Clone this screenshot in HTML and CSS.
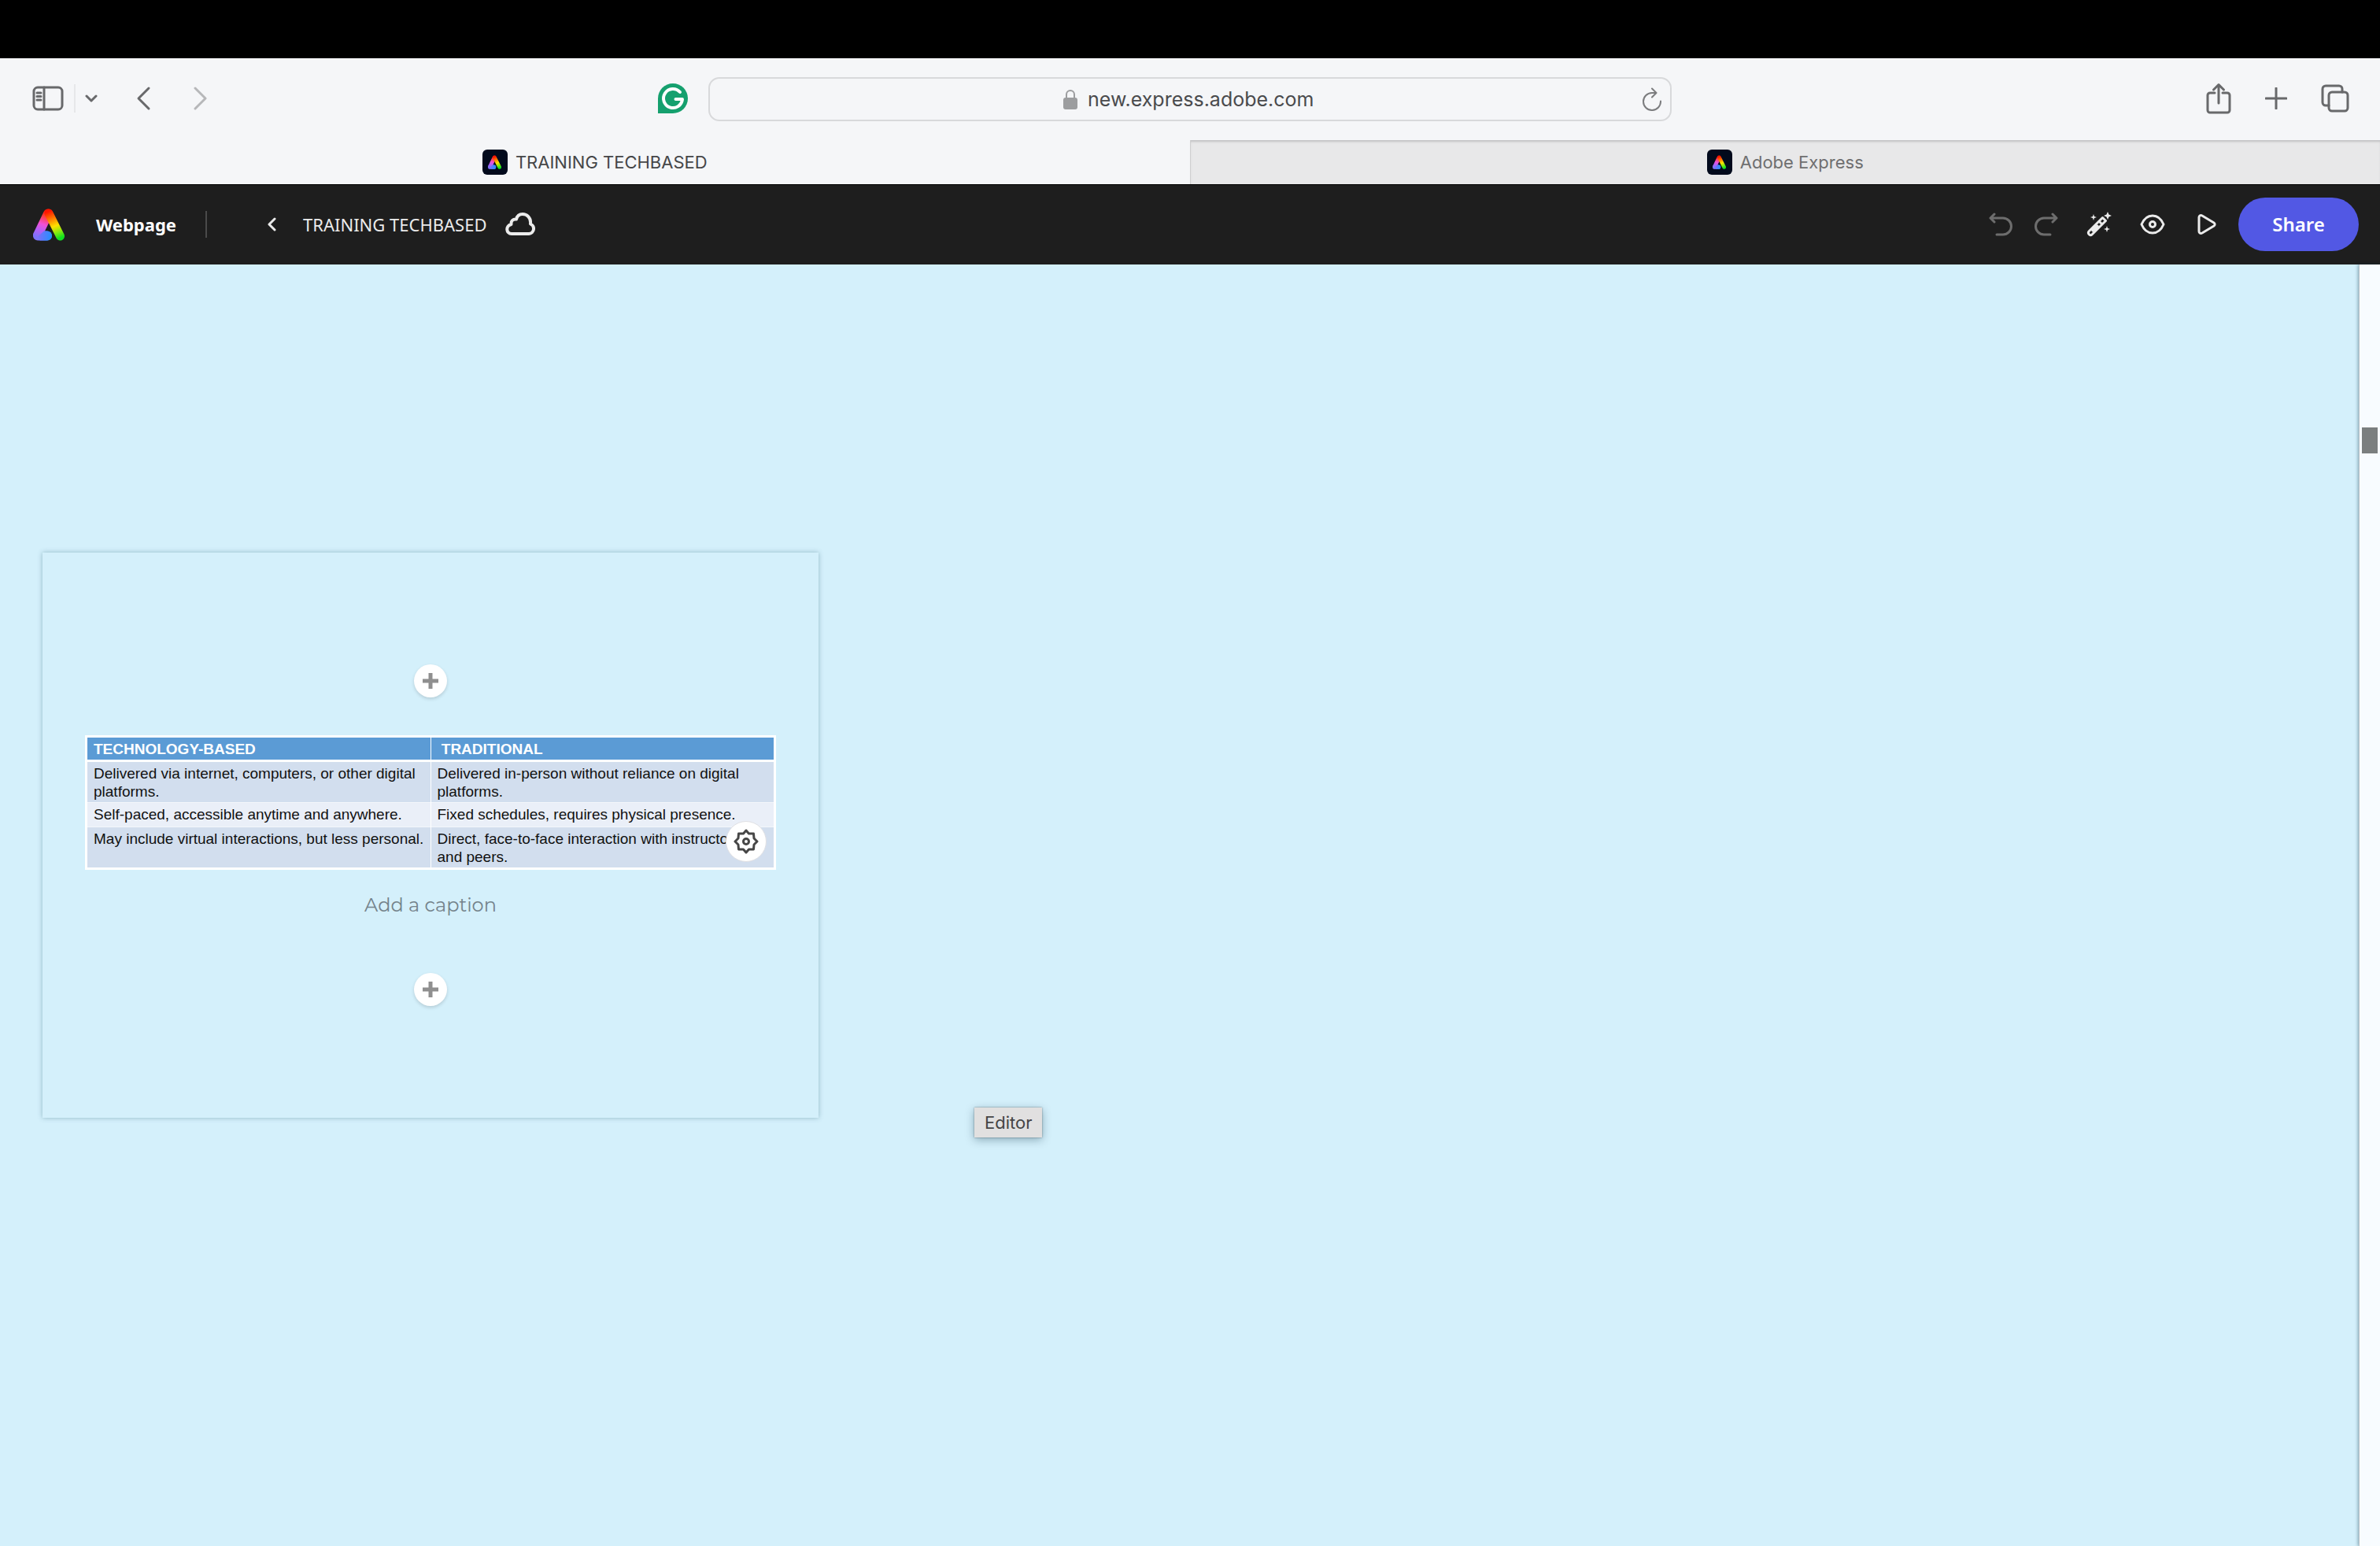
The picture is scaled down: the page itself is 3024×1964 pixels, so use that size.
FILE: index.html
```html
<!DOCTYPE html>
<html lang="en">
<head>
    <meta charset="UTF-8">
    <meta name="viewport" content="width=device-width, initial-scale=1.0">
    <title>TRAINING TECHBASED</title>
    <link rel="stylesheet" href="styles.css">
</head>
<body>
    <svg class="sprite" aria-hidden="true">
        <defs>
            <linearGradient id="legRight" gradientUnits="userSpaceOnUse" x1="20" y1="4" x2="34" y2="38">
                <stop offset="0" stop-color="#ff1500"/>
                <stop offset="0.3" stop-color="#ff8400"/>
                <stop offset="0.55" stop-color="#ffe100"/>
                <stop offset="0.8" stop-color="#7dea10"/>
                <stop offset="1" stop-color="#10e020"/>
            </linearGradient>
            <linearGradient id="legLeft" gradientUnits="userSpaceOnUse" x1="20" y1="4" x2="8" y2="38">
                <stop offset="0" stop-color="#ff1500"/>
                <stop offset="0.2" stop-color="#ff3b3b"/>
                <stop offset="0.5" stop-color="#f050d8"/>
                <stop offset="0.75" stop-color="#b060f8"/>
                <stop offset="1" stop-color="#7a74fb"/>
            </linearGradient>
            <linearGradient id="foot" gradientUnits="userSpaceOnUse" x1="2" y1="34" x2="24" y2="36">
                <stop offset="0" stop-color="#9068fa"/>
                <stop offset="1" stop-color="#2190ff"/>
            </linearGradient>
            <symbol id="logo" viewBox="0 0 40 41">
                <path d="M6 35H18" stroke="url(#foot)" stroke-width="12" stroke-linecap="round"/>
                <path d="M19 7L6 34" stroke="url(#legLeft)" stroke-width="12" stroke-linecap="round"/>
                <path d="M10 40L6 36L14 29H18A6 6 0 0 1 18 41H8Z" fill="url(#foot)"/>
                <path d="M20 6.500L34.500 35.500" stroke="url(#legRight)" stroke-width="11" stroke-linecap="round"/>
            </symbol>
        </defs>
    </svg>

    <div class="notch"></div>

    <header class="toolbar">
        <div class="toolbar-left">
            <button type="button" class="icon-btn sidebar-btn" aria-label="Sidebar">
                <svg width="40" height="32" viewBox="0 0 40 32"><rect x="2" y="2" width="36" height="28" rx="5"/><path d="M15 2V30M6 9H11M6 13.500H11M6 18H11"/></svg>
            </button>
            <button type="button" class="icon-btn groups-btn" aria-label="Tab groups">
                <svg width="16" height="12" viewBox="0 0 16 12"><path d="M2 3L8 9L14 3"/></svg>
            </button>
            <button type="button" class="icon-btn back-btn" aria-label="Back">
                <svg width="20" height="32" viewBox="0 0 20 32"><path d="M17 3L4 16L17 29"/></svg>
            </button>
            <button type="button" class="icon-btn forward-btn" aria-label="Forward" disabled>
                <svg width="20" height="32" viewBox="0 0 20 32"><path d="M3 3L16 16L3 29"/></svg>
            </button>
            <button type="button" class="icon-btn grammar-btn" aria-label="Grammar check">
                <svg width="38" height="38" viewBox="0 0 38 38"><g class="grammar-bg"><rect y="19" width="19" height="19"/><circle cx="19" cy="19" r="19"/></g><path class="grammar-g" d="M28 11A12 12 0 1 0 31 20H22.500"/></svg>
            </button>
        </div>
        <div class="address">
            <svg class="lock" width="20" height="26" viewBox="0 0 20 26"><rect x="1" y="11" width="18" height="15" rx="3"/><path d="M5 12V7A5 5 0 0 1 15 7V12"/></svg>
            <input type="text" class="address-input" aria-label="Address" value="new.express.adobe.com">
            <button type="button" class="icon-btn reload-btn" aria-label="Reload">
                <svg width="26" height="30" viewBox="0 0 26 30"><path d="M24 17.500A11 11 0 1 1 13 7H18M13 1.500L18.500 7L13 12.500"/></svg>
            </button>
        </div>
        <div class="toolbar-right">
            <button type="button" class="icon-btn" aria-label="Share page">
                <svg width="32" height="40" viewBox="0 0 32 40"><path d="M11 13H5A3 3 0 0 0 2 16V35A3 3 0 0 0 5 38H27A3 3 0 0 0 30 35V16A3 3 0 0 0 27 13H21M16 26V3M9.500 9L16 2.500L22.500 9"/></svg>
            </button>
            <button type="button" class="icon-btn" aria-label="New tab">
                <svg width="28" height="28" viewBox="0 0 28 28"><path d="M14 1V27M1 14H27"/></svg>
            </button>
            <button type="button" class="icon-btn" aria-label="Show all tabs">
                <svg width="36" height="36" viewBox="0 0 36 36"><rect x="10" y="10" width="24" height="24" rx="4"/><path d="M10 27H6A4 4 0 0 1 2 23V6A4 4 0 0 1 6 2H23A4 4 0 0 1 27 6V10"/></svg>
            </button>
        </div>
    </header>

    <nav class="tabs">
        <a href="#" class="tab active">
            <span class="favicon"><svg width="17" height="18"><use href="#logo"/></svg></span>
            TRAINING TECHBASED
        </a>
        <a href="#" class="tab">
            <span class="favicon"><svg width="17" height="18"><use href="#logo"/></svg></span>
            Adobe Express
        </a>
    </nav>

    <div class="appbar">
        <a href="#" class="logo" aria-label="Home"><svg width="40" height="42"><use href="#logo"/></svg></a>
        <span class="doc-type">Webpage</span>
        <button type="button" class="icon-btn exit-btn" aria-label="Back to projects">
            <svg width="12" height="18" viewBox="0 0 12 18"><path d="M10 2L3 9L10 16"/></svg>
        </button>
        <span class="doc-title">TRAINING TECHBASED</span>
        <svg class="cloud" width="38" height="30" viewBox="0 0 38 30"><path d="M8 27H30A6.500 6.500 0 0 0 32 14.500C33 6 27 2 22 2C18 2 15 4.500 14 8.500C10 8 7 10.500 7.500 15C0 17 1 27 8 27Z"/></svg>
        <div class="actions">
            <button type="button" class="icon-btn" aria-label="Undo" disabled>
                <svg width="30" height="30" viewBox="0 0 30 30"><path d="M7 2L2 7L7 12M2 7H18A10 10 0 0 1 18 28H10"/></svg>
            </button>
            <button type="button" class="icon-btn" aria-label="Redo" disabled>
                <svg width="30" height="30" viewBox="0 0 30 30"><path d="M23 2L28 7L23 12M28 7H12A10 10 0 0 0 12 28H20"/></svg>
            </button>
            <button type="button" class="icon-btn wide" aria-label="Magic design">
                <svg width="32" height="32" viewBox="0 0 32 32"><path d="M3 25L20.500 7.500L24.500 11.500L7 29C5 31 1 28 3 25ZM16 12L20 16M8 24L14 18"/><path class="spark" d="M27 0L28.500 3.500L32 5L28.500 6.500L27 10L25.500 6.500L22 5L25.500 3.500ZM9 3L10 6L13 7L10 8L9 11L8 8L5 7L8 6ZM26 18L27 21L30 22L27 23L26 26L25 23L22 22L25 21Z"/></svg>
            </button>
            <button type="button" class="icon-btn wide" aria-label="Preview">
                <svg width="32" height="26" viewBox="0 0 32 26"><path d="M2 13C5 6 10 2 16 2S27 6 30 13C27 20 22 24 16 24S5 20 2 13Z"/><circle cx="16" cy="13" r="3.500"/></svg>
            </button>
            <button type="button" class="icon-btn play-btn" aria-label="Present">
                <svg width="24" height="26" viewBox="0 0 24 26"><path d="M2 4V22C2 24 4 25 6 24L21 15C22.500 14 22.500 12 21 11L6 2C4 1 2 2 2 4Z"/></svg>
            </button>
            <button type="button" class="share-btn">Share</button>
        </div>
    </div>

    <div class="workspace">
        <main class="canvas">
            <section class="card">
                <button type="button" class="add-btn" aria-label="Add content above">
                    <svg width="20" height="20" viewBox="0 0 20 20"><path d="M10 0V20M0 10H20"/></svg>
                </button>
                <div class="figure">
                    <table>
                        <thead>
                            <tr><th>TECHNOLOGY-BASED</th><th>&nbsp;TRADITIONAL</th></tr>
                        </thead>
                        <tbody>
                            <tr>
                                <td>Delivered via internet, computers, or other digital platforms.</td>
                                <td>Delivered in-person without reliance on digital platforms.</td>
                            </tr>
                            <tr>
                                <td>Self-paced, accessible anytime and anywhere.</td>
                                <td>Fixed schedules, requires physical presence.</td>
                            </tr>
                            <tr>
                                <td>May include virtual interactions, but less personal.</td>
                                <td>Direct, face-to-face interaction with instructors and peers.</td>
                            </tr>
                        </tbody>
                    </table>
                    <button type="button" class="settings-btn" aria-label="Image settings">
                        <svg width="32" height="32" viewBox="0 0 32 32"><path d="M16 2L19.500 6L25.500 6L26 12L30 16L26 20L25.500 26L19.500 26L16 30L12.500 26L6.500 26L6 20L2 16L6 12L6.500 6L12.500 6Z"/><circle cx="16" cy="16" r="3.500"/></svg>
                    </button>
                </div>
                <input type="text" class="caption" aria-label="Caption" placeholder="Add a caption">
                <button type="button" class="add-btn" aria-label="Add content below">
                    <svg width="20" height="20" viewBox="0 0 20 20"><path d="M10 0V20M0 10H20"/></svg>
                </button>
            </section>
            <div class="tooltip" role="tooltip">Editor</div>
        </main>
        <div class="scrollbar"><div class="thumb"></div></div>
    </div>
</body>
</html>
```
FILE: styles.css
```css
* {
    box-sizing: border-box;
}
body {
    margin: 0;
    min-height: 100vh;
    display: flex;
    flex-direction: column;
    background: #d4f0fb;
    font-family: Inter, Roboto, sans-serif;
}
button, input {
    margin: 0;
    padding: 0;
    border: none;
    background: none;
    font-family: inherit;
}
a {
    color: inherit;
    text-decoration: none;
}
svg {
    display: block;
    fill: none;
    flex-shrink: 0;
}
.sprite {
    position: absolute;
    width: 0;
    height: 0;
}
.icon-btn {
    display: flex;
    align-items: center;
    justify-content: center;
    stroke: #68696b;
    stroke-width: 3;
    stroke-linecap: round;
    stroke-linejoin: round;
}

/* Browser chrome */
.notch {
    height: 74px;
    background: #000;
}
.toolbar {
    display: grid;
    grid-template-columns: 1fr minmax(0, 1224px) 1fr;
    align-items: center;
    height: 104px;
    background: #f5f6f8;
}
.toolbar-left {
    display: flex;
    align-items: center;
    padding: 0 26px 2px 41px;
}
.sidebar-btn {
    height: 36px;
    padding-right: 13px;
    border-right: 2px solid #e6e7e9;
}
.groups-btn {
    margin-left: 12px;
}
.back-btn {
    margin-left: 48px;
}
.forward-btn {
    margin-left: 53px;
    stroke: #b6b7b9;
}
.grammar-btn {
    margin-left: auto;
}
.grammar-bg {
    fill: #15a06e;
    stroke: none;
}
.grammar-g {
    stroke: #fff;
    stroke-width: 4;
}
.address {
    display: flex;
    align-items: center;
    justify-content: center;
    gap: 12px;
    position: relative;
    height: 56px;
    border: 2px solid #d8d9db;
    border-radius: 14px;
}
.lock {
    fill: #9c9d9f;
}
.lock path {
    fill: none;
    stroke: #9c9d9f;
    stroke-width: 2;
}
.address-input {
    width: 292px;
    font-size: 25px;
    color: #4a4b4d;
}
.reload-btn {
    position: absolute;
    right: 10px;
    stroke: #7b7c7e;
    stroke-width: 2;
}
.toolbar-right {
    display: flex;
    align-items: center;
    justify-content: flex-end;
    gap: 43px;
    padding: 0 39px 2px 0;
}
.tabs {
    display: flex;
    height: 56px;
    background: #f5f6f8;
}
.tab {
    flex: 1;
    display: flex;
    align-items: center;
    justify-content: center;
    gap: 10px;
    font-size: 22px;
    color: #6f6f70;
    background: #e8e8e9;
    border-left: 1px solid #cfcfd0;
    box-shadow: inset 0 3px 3px -1px #c0c0c2;
}
.tab.active {
    color: #454648;
    background: #f5f6f8;
    border: none;
    box-shadow: none;
}
.favicon {
    display: flex;
    align-items: center;
    justify-content: center;
    width: 32px;
    height: 32px;
    border-radius: 6px;
    background: #020a1c;
}

/* Editor top bar */
.appbar {
    display: flex;
    align-items: center;
    height: 102px;
    padding: 0 27px 2px 42px;
    background: #1e1e1e;
    border-top: 1px solid #000;
    color: #ebebeb;
    font-family: "Noto Sans", "Open Sans", sans-serif;
    font-size: 22px;
}
.appbar .icon-btn {
    stroke: #ebebeb;
}
.appbar .icon-btn:disabled {
    stroke: #6d6d6d;
}
.doc-type {
    margin-left: 40px;
    padding-right: 37px;
    line-height: 34px;
    font-weight: 700;
    color: #fff;
    border-right: 2px solid #4a4a4a;
}
.exit-btn {
    margin: 0 34px 0 76px;
}
.cloud {
    margin-left: 24px;
    stroke: #ebebeb;
    stroke-width: 4;
    stroke-linejoin: round;
}
.actions {
    display: flex;
    align-items: center;
    margin-left: auto;
    gap: 28px;
}
.actions .wide {
    margin-left: 8px;
}
.actions .play-btn {
    margin-left: 13px;
}
.spark {
    fill: #ebebeb;
    stroke: none;
}
.share-btn {
    width: 153px;
    height: 68px;
    border-radius: 34px;
    background: #5258e4;
    color: #fff;
    font-size: 24px;
    font-weight: 600;
}

/* Page being edited */
.workspace {
    flex: 1;
    display: flex;
}
.canvas {
    flex: 1;
    position: relative;
    padding: 366px 54px 0;
}
.card {
    display: flex;
    flex-direction: column;
    align-items: center;
    width: 986px;
    padding: 142px 54px;
    box-shadow: 0 0 6px rgba(60, 110, 130, 0.45);
}
.add-btn {
    display: flex;
    align-items: center;
    justify-content: center;
    width: 42px;
    height: 42px;
    border-radius: 50%;
    background: #fff;
    stroke: #8f8f8f;
    stroke-width: 5;
    box-shadow: 0 2px 4px rgba(0, 0, 0, 0.15);
}
.figure {
    position: relative;
    width: 100%;
    margin: 48px 0 28px;
}
table {
    width: 100%;
    table-layout: fixed;
    border-collapse: collapse;
    border: 3px solid #fff;
    font-family: "Liberation Sans", Arial, sans-serif;
    font-size: 19px;
    line-height: 23px;
    color: #111;
}
th, td {
    padding: 3px 8px 2px 8px;
    text-align: left;
    vertical-align: top;
    border-left: 1px solid #fff;
}
th {
    background: #5b9bd5;
    border-bottom: 3px solid #fff;
    color: #fff;
}
tbody tr {
    background: #d2deee;
    border-bottom: 1px solid #f4f7fb;
}
tbody tr:nth-child(2) {
    background: #eaeff8;
}
tbody tr:nth-child(2) td {
    padding-bottom: 4px;
}
.settings-btn {
    position: absolute;
    right: 12px;
    bottom: 10px;
    display: flex;
    align-items: center;
    justify-content: center;
    width: 52px;
    height: 52px;
    border: 1px solid #e0e0e4;
    border-radius: 50%;
    background: #fff;
    stroke: #464646;
    stroke-width: 3;
    stroke-linejoin: round;
}
.caption {
    width: 100%;
    height: 32px;
    margin-bottom: 71px;
    text-align: center;
    font-family: Montserrat, Inter, sans-serif;
    font-size: 24px;
}
.caption::placeholder {
    color: #74838b;
    opacity: 1;
}
.tooltip {
    position: absolute;
    left: 1238px;
    top: 1071px;
    padding: 0 13px;
    font-size: 22px;
    line-height: 38px;
    color: #454545;
    background: #e1e0e0;
    box-shadow: 0 3px 12px rgba(0, 40, 60, 0.35), 0 0 2px rgba(0, 0, 0, 0.4);
}
.scrollbar {
    width: 27px;
    padding: 207px 3px 0;
    background: #f8fcff;
    border-left: 1px solid #b9c3c8;
    box-shadow: -1px 0 4px rgba(0, 50, 70, 0.4);
    z-index: 1;
}
.thumb {
    height: 33px;
    background: #7b7f7f;
}
```
